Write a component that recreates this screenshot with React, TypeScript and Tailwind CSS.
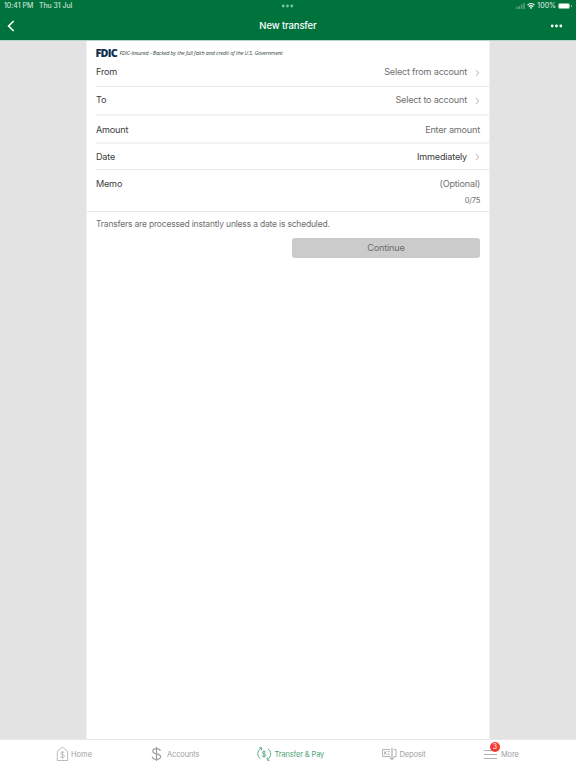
import React from "react";

const Chevron = ({ className = "" }: { className?: string }) => (
  <svg className={`ml-[7px] h-[8px] w-[6px] shrink-0 ${className}`} viewBox="0 0 6 8" fill="none" stroke="#b0b0b0" strokeWidth="1">
    <path d="M1.900 1.100 4.700 4 1.900 6.900" />
  </svg>
);

const Dots = ({ className = "" }: { className?: string }) => (
  <svg className={`h-[4px] w-[13px] ${className}`} viewBox="0 0 13 4" fill="currentColor">
    <circle cx="2.200" cy="2" r="1.400" />
    <circle cx="6.500" cy="2" r="1.400" />
    <circle cx="10.800" cy="2" r="1.400" />
  </svg>
);

const HomeIcon = () => (
  <svg className="h-[16px] w-[13px] shrink-0" viewBox="0 0 13 16" fill="none" stroke="#b4b4b4" strokeWidth=".9">
    <path d="M1.300 14.500V5.300L6.500 1.200 11.700 5.300v9.200Z" />
    <path d="M8.300 7.100C8.100 6.300 7.400 6 6.500 6c-1 0-1.700.5-1.700 1.300 0 1.900 3.600 1 3.600 2.900 0 .8-.8 1.400-1.900 1.400s-1.800-.5-2-1.300M6.500 5.100v7.400" />
  </svg>
);

const DollarIcon = () => (
  <svg className="h-[16px] w-[11px] shrink-0" viewBox="0 0 11 16" fill="none" stroke="#9f9f9f" strokeWidth="1.2">
    <path d="M9.300 4.800C9 3.300 7.500 2.600 5.500 2.600c-2.200 0-3.700 1-3.700 2.600C1.800 9 9.600 6.600 9.600 10.600c0 1.700-1.600 2.800-4.100 2.800-2.300 0-4-1-4.300-2.800M5.500 1v14" />
  </svg>
);

const TransferIcon = () => (
  <svg className="h-[16px] w-[15px] shrink-0" viewBox="0 0 15 16" fill="none" stroke="#5dab86" strokeWidth="1">
    <path d="M3.200 12.700C-.1 10-.1 5.200 3.900 2.200M2.200 1.600l2.500.2-.3 2.500M10.900 2.800c3.700 2.700 3.700 7.700-.1 10.700M12.600 14.300l-2.500-.2.300-2.500" />
    <path d="M8.800 6.500C8.500 5.800 7.900 5.500 7 5.500c-1 0-1.700.5-1.700 1.200 0 1.700 3.500.8 3.500 2.600 0 .8-.8 1.300-1.800 1.300s-1.700-.4-1.900-1.200M7 4.400v7.300" />
  </svg>
);

const DepositIcon = () => (
  <svg className="h-[14px] w-[15px] shrink-0" viewBox="0 0 15 14" fill="none" stroke="#adadad" strokeWidth=".9">
    <path d="M8.200 9.500H.6v-7h7.600M11.800 2.500h2.300v7h-2.300" />
    <path d="M2.700 4.300v3.400M4.600 4.300 3 6l1.600 1.700M5.700 4.700h2.100M5.700 7.200h2.100" />
    <path strokeWidth="1.600" stroke="#c2c2c2" d="M10 .7v10" />
    <path strokeWidth="1.100" d="M7.800 10.400 10 12.500l2.200-2.100" />
  </svg>
);

const Home = () => (
  <div className="flex h-[768px] w-[576px] flex-col overflow-hidden bg-[#e3e3e3] font-['Inter','Liberation_Sans',sans-serif] text-[9.100px] tracking-[-0.200px] text-[#3c3c3c]">
    <header className="h-[40px] shrink-0 bg-[#00733d] text-white">
      <div className="grid h-[12px] grid-cols-3 items-center pl-1 pr-[4px] text-[7px] leading-[12px] text-[#e2f1e9]">
        <div className="flex gap-[6px]">
          <span className="w-[29px] whitespace-nowrap tracking-[0.02px]">10:41 PM</span>
          <span className="whitespace-nowrap tracking-[-0.05px]">Thu 31 Jul</span>
        </div>
        <Dots className="mx-auto text-[#72c99c]" />
        <div className="flex items-center justify-end">
          <svg className="h-[6px] w-[9px]" viewBox="0 0 9 6" fill="#579f7c">
            <path d="M0 4h1.600v2H0zM2.400 3H4v3H2.400zM4.800 1.500h1.600V6H4.800zM7.200 0h1.600v6H7.200z" />
          </svg>
          <svg className="ml-[2px] h-[6px] w-[8px]" viewBox="0 0 8 6" fill="none" stroke="white" strokeWidth="1.200">
            <path d="M.5 2.100C2.500.2 5.500.2 7.500 2.100M1.800 3.700c1.300-1.200 3.100-1.200 4.400 0" />
            <path d="M2.800 4.700c.6-.5 1.800-.5 2.400 0L4 5.900Z" fill="white" stroke="none" />
          </svg>
          <span className="ml-[2px] tracking-[0.02px]">100%</span>
          <span className="ml-[2px] h-[6px] w-[12px] rounded-[2px] border-[.5px] border-[#80b99e] bg-white" />
          <span className="ml-[1px] h-[2px] w-[1px] bg-[#80b99e]" />
        </div>
      </div>
      <div className="grid h-[28px] grid-cols-3 items-center pl-[7px] pr-[13px]">
        <svg className="h-[12px] w-[8px]" viewBox="0 0 8 12" fill="none" stroke="white" strokeWidth="1.600">
          <path d="M6.700 1 1.600 6l5.100 5" />
        </svg>
        <h1 className="-mr-[6px] text-center text-[9.500px] font-medium leading-[14px] tracking-[-0.120px]">New transfer</h1>
        <Dots className="-mt-[1px] ml-auto" />
      </div>
    </header>
    <div className="h-px shrink-0 bg-[#b6d5c6]" />

    <main className="ml-[86px] w-[404px] flex-1 border-x border-[#f1f1f1] bg-white">
      <div className="flex h-[20px] items-center pl-[8.500px] pt-[4px] font-['Open_Sans',sans-serif] text-[#0d3050]">
        <span className="w-[24px] text-[10.800px] font-extrabold leading-[12px] tracking-[-0.750px]">FDIC</span>
        <span className="whitespace-nowrap text-[5.400px] font-medium italic leading-[8px] tracking-[-0.110px] text-[#333f46]">FDIC-Insured - Backed by the full faith and credit of the U.S. Government</span>
      </div>
      <div className="ml-[9px] flex h-[26px] items-center border-b border-[#e8e8e8] pb-[3px] pr-[9px]">
        <span>From</span>
        <span className="ml-auto text-[#6f6f6f]">Select from account</span>
        <Chevron className="mt-[2px]" />
      </div>
      <div className="ml-[9px] flex h-[29px] items-center border-b-2 border-[#f3f3f3] pb-[1px] pr-[9px]">
        <span>To</span>
        <span className="ml-auto text-[#6f6f6f]">Select to account</span>
        <Chevron className="mt-[2px]" />
      </div>
      <div className="ml-[9px] flex h-[28px] items-center border-b-2 border-[#f3f3f3] pr-[9px] pt-[2px]">
        <span>Amount</span>
        <span className="ml-auto text-[#6f6f6f]">Enter amount</span>
      </div>
      <div className="ml-[9px] flex h-[26px] items-center border-b border-[#e8e8e8] pr-[9px]">
        <span>Date</span>
        <span className="ml-auto">Immediately</span>
        <Chevron />
      </div>
      <div className="h-[42px] border-b border-[#e8e8e8] px-[9px] pt-[7px]">
        <div className="flex h-[13px] items-center justify-between">
          <span>Memo</span>
          <span className="text-[#6f6f6f]">(Optional)</span>
        </div>
        <div className="mt-[5px] text-right text-[7.500px] leading-[12px] tracking-[-0.200px] text-[#6f6f6f]">0/75</div>
      </div>
      <p className="ml-[9px] mt-[5px] h-[14px] whitespace-nowrap text-[8.500px] leading-[14px] tracking-[-0.190px] text-[#6f6f6f]">Transfers are processed instantly unless a date is scheduled.</p>
      <button className="ml-[205px] mt-[7px] block h-[20px] w-[188px] rounded-[3px] bg-[#cbcbcb] text-center text-[9.100px] leading-[20px] tracking-[-0.180px] text-[#6b6b6b]">Continue</button>
    </main>

    <nav className="flex h-[29px] shrink-0 border-t border-[#e8e8e8] bg-white text-[7.500px] leading-[12px] tracking-[-0.150px] text-[#a0a0a0]">
      <div className="flex w-[151px] items-center pl-[56px]">
        <HomeIcon /><span className="ml-[2px] mt-[2px] tracking-normal">Home</span>
      </div>
      <div className="flex w-[106px] items-center">
        <DollarIcon /><span className="ml-[5px] mt-[2px]">Accounts</span>
      </div>
      <div className="flex w-[125px] items-center text-[#4fa37a]">
        <TransferIcon /><span className="ml-[2.500px] mt-[2px]">Transfer &amp; Pay</span>
      </div>
      <div className="flex w-[102px] items-center">
        <DepositIcon /><span className="ml-[2.500px] mt-[2px]">Deposit</span>
      </div>
      <div className="relative flex items-center">
        <svg className="h-[9px] w-[13px]" viewBox="0 0 13 9" stroke="#b1b1b1" strokeWidth="1"><path d="M0 .5h13M0 4.500h13M0 8.500h13" /></svg>
        <span className="ml-[4px] mt-[2px]">More</span>
        <span className="absolute left-[6px] top-[2px] size-[10px] rounded-full bg-[#f83a2f] text-center text-[7px] leading-[10px] tracking-normal text-white">3</span>
      </div>
    </nav>
  </div>
);

export default Home;
